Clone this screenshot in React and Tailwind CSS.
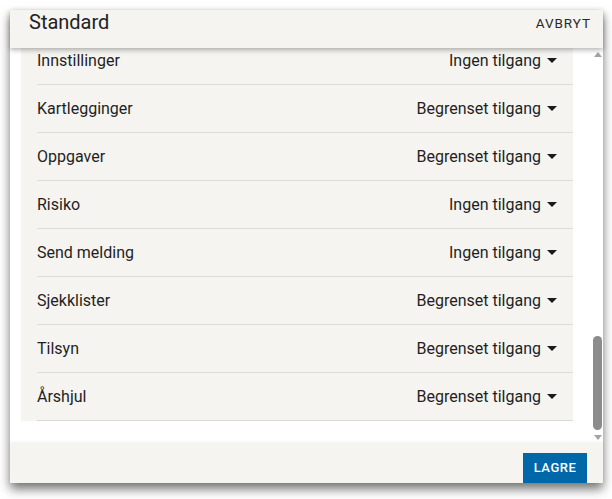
import React from "react"

const rows = [
  { label: "Innstillinger", value: "Ingen tilgang" },
  { label: "Kartlegginger", value: "Begrenset tilgang" },
  { label: "Oppgaver", value: "Begrenset tilgang" },
  { label: "Risiko", value: "Ingen tilgang" },
  { label: "Send melding", value: "Ingen tilgang" },
  { label: "Sjekklister", value: "Begrenset tilgang" },
  { label: "Tilsyn", value: "Begrenset tilgang" },
  { label: "Årshjul", value: "Begrenset tilgang" },
]

function Caret() {
  return (
    <svg width="10" height="5" viewBox="0 0 10 5" className="ml-[6px]">
      <path d="M0 0h10L5 5z" fill="#1a1a1a" />
    </svg>
  )
}

export default function App() {
  return (
    <div
      className="relative w-[612px] h-[499px] bg-white overflow-hidden pt-[10px] pl-[10px]"
      style={{ fontFamily: "Roboto, 'Noto Sans', sans-serif" }}
    >
      <div className="w-[593px] h-[473px] bg-white flex flex-col shadow-[0_6px_10px_rgba(0,0,0,0.55)]">
        {/* Header */}
        <div className="relative z-10 h-[38px] shrink-0 bg-[#f5f4f1] flex justify-between items-start pl-[19px] pr-[12px] shadow-[0_2px_5px_rgba(0,0,0,0.3)]">
          <span className="text-[20px] leading-6 text-[#222]">Standard</span>
          <span className="text-[13.5px] leading-6 tracking-[0.07em] text-[#2a2a2a] pt-[1px]">AVBRYT</span>
        </div>

        {/* Body */}
        <div className="flex flex-1 min-h-0">
          <div className="flex-1 overflow-hidden">
            <div className="-mt-[11px] ml-[11px] w-[552px] bg-[#f5f4f1]">
              {rows.map((r) => (
                <div key={r.label} className="ml-[16px] h-[48px] flex items-center justify-between border-b border-[#dcdbd8] pr-[16px]">
                  <span className="text-[16px] text-[#1f1f1f]">{r.label}</span>
                  <span className="flex items-center text-[16px] text-[#1f1f1f]">
                    {r.value}
                    <Caret />
                  </span>
                </div>
              ))}
            </div>
          </div>
          {/* Scrollbar */}
          <div className="w-[11px] shrink-0 flex flex-col items-center bg-white">
            <svg width="8" height="5" viewBox="0 0 8 5" className="mt-[4px]">
              <path d="M0 5L4 0l4 5z" fill="#a3a3a3" />
            </svg>
            <div className="flex-1" />
            <div className="w-[9px] h-[94px] rounded-full bg-[#8c8c8c]" />
            <svg width="8" height="5" viewBox="0 0 8 5" className="mt-[5px] mb-[3px]">
              <path d="M0 0h8L4 5z" fill="#a3a3a3" />
            </svg>
          </div>
        </div>

        {/* Footer */}
        <div className="h-[40px] shrink-0 bg-[#f5f4f1] flex justify-end items-start pt-[10px] pr-[16px] shadow-[0_-1px_3px_rgba(0,0,0,0.06)]">
          <button className="w-[64px] h-[30px] bg-[#0068a8] text-white text-[13px] font-medium tracking-[0.04em]">
            LAGRE
          </button>
        </div>
      </div>
    </div>
  )
}
